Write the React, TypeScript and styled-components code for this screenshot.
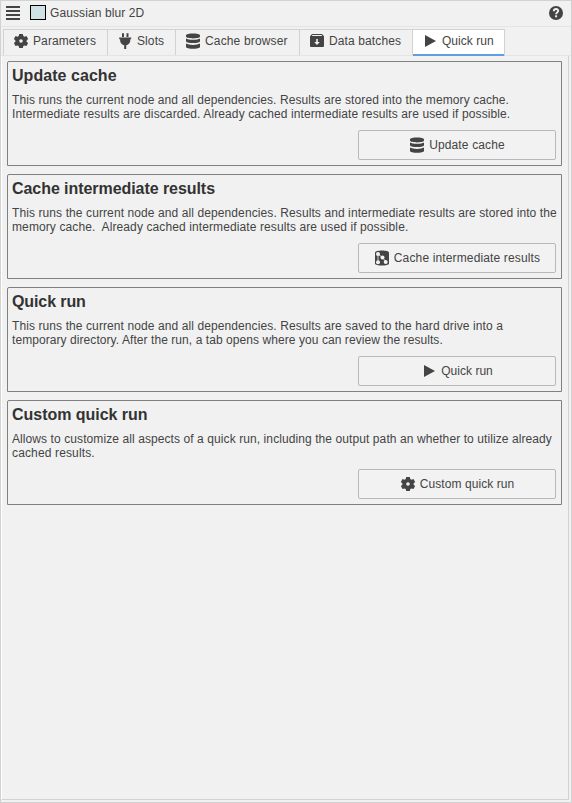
import React from 'react';
import styled, { createGlobalStyle } from 'styled-components';

const Global = createGlobalStyle`
  * { box-sizing: border-box; }
  html, body { margin: 0; padding: 0; background: #f1f1f1; }
  body { overflow: hidden; }
`;

const Window = styled.div`
  width: 572px;
  height: 803px;
  display: flex;
  flex-direction: column;
  border: 1px solid #d2d2d2;
  background: #f1f1f1;
  color: #444;
  font: 12px/14px 'Liberation Sans', Arial, sans-serif;
  white-space: pre;
`;

const Header = styled.header`
  height: 26px;
  flex: none;
  display: flex;
  align-items: center;
  padding: 0 8px 1px 5px;
  border-bottom: 1px solid #e4e4e4;
`;

const Swatch = styled.span`
  width: 16px;
  height: 15px;
  margin: 0 4px 1px 10px;
  border: 1px solid #000;
  background: #cee2e5;
`;

const Label = styled.span<{ $spacing: number }>`
  letter-spacing: ${(p) => p.$spacing}px;
`;

const Name = styled(Label)`
  flex: 1;
`;

const Icon = styled.svg`
  flex: none;
  display: block;
  fill: #444;
`;

const Tabs = styled.nav`
  height: 29px;
  flex: none;
  display: flex;
  padding: 2px 2px 0;
  border-bottom: 1px solid #e4e4e4;
`;

const Tab = styled.div<{ $width: number; $active?: boolean }>`
  width: ${(p) => p.$width}px;
  height: ${(p) => (p.$active ? 27 : 26)}px;
  display: flex;
  align-items: flex-start;
  gap: 4px;
  padding: 3px 0 0 9px;
  border-top: 1px solid #d2d2d2;
  border-right: 1px solid #d2d2d2;
  background: ${(p) => (p.$active ? '#fff' : 'transparent')};
  box-shadow: ${(p) => (p.$active ? 'inset 0 -2px #5f9fde' : 'none')};
  line-height: 16px;
  &:first-child {
    border-left: 1px solid #d2d2d2;
  }
`;

const Body = styled.main`
  flex: 1;
  margin: 0 2px 2px 0;
  padding: 5px 6px 0 5px;
  border: solid;
  border-width: 0 1px 1px;
  border-color: #d2d2d2;
  border-left-color: #fff;
  display: flex;
  flex-direction: column;
  gap: 8px;
`;

const Card = styled.section`
  height: 105px;
  display: flex;
  flex-direction: column;
  padding: 5px 5px 5px 4px;
  border: 1px solid #808080;
  border-top-left-radius: 2px;
`;

const Title = styled.h2<{ $spacing: number }>`
  margin: 0 0 8px;
  font-size: 16px;
  line-height: 18px;
  letter-spacing: ${(p) => p.$spacing}px;
  color: #333;
`;

const Line = styled(Label)`
  display: block;
  height: 14px;
`;

const Button = styled.button`
  width: 198px;
  height: 30px;
  margin: auto 0 0 auto;
  padding: 0;
  display: flex;
  align-items: center;
  justify-content: center;
  gap: 4px;
  border: 1px solid #b8b8bc;
  border-radius: 2px;
  background: #f2f2f2;
  color: #444;
  font: inherit;
`;

const paths = {
  gear:
    'M6.2 1h3.6l.5 2 1.2.7 2-.6 1.600 2.900-1.500 1.400v1.300L15.100 10.100l-1.600 2.900-2-.6-1.200.7-.5 1.900H6.200l-.5-1.900-1.200-.7-2 .6L.9 10.100l1.500-1.400V7.400L.9 6l1.600-2.900 2 .6L5.700 3ZM8 6.200a1.800 1.800 0 1 0 0 3.600 1.800 1.800 0 0 0 0-3.600Z',
  plug: 'M5 .3h2v3.700h-2ZM9.500 .3h2v3.700h-2ZM2.200 4.600h12v1.700h-1v2A5 5 0 0 1 9.200 12.200V16H7.200v-3.800A5 5 0 0 1 3.200 8.300V6.300H2.200Z',
  database:
    'M1 2.300C1-.2 15-.2 15 2.300v1.200C15 6 1 6 1 3.500ZM1 5.400c2.500 1.900 11.500 1.900 14 0v3C13.500 10.600 2.500 10.600 1 8.400ZM1 10.500c2.500 1.900 11.500 1.900 14 0v3.200c0 2.700-14 2.700-14 0Z',
  archive:
    'M3 1h10l2 2.300V13a1 1 0 0 1-1 1H2a1 1 0 0 1-1-1V3.300ZM3.500 2 2.700 3.100h10.600l-.8-1.100ZM7.200 6v3H5.200L8 12 10.800 9H8.800V6Z',
  play: 'M3 2v12l11-6Z',
};

type Glyph = keyof typeof paths | 'graph';

function Symbol({ name }: { name: Glyph }) {
  if (name === 'graph') {
    return (
      <Icon width="16" height="16" viewBox="0 0 16 16">
        <path d="M1 2.500C1-.3 15-.3 15 2.500v11c0 2.800-14 2.800-14 0Z" />
        <path d="M4 12V4l4.500 3.500L12 12" fill="none" stroke="#f1f1f1" strokeWidth=".8" />
        <g fill="#f1f1f1">
          <circle cx="4" cy="4" r="2" />
          <circle cx="4" cy="12.300" r="2" />
          <circle cx="8.500" cy="7.500" r="2" />
          <circle cx="11.700" cy="12" r="2" />
        </g>
      </Icon>
    );
  }
  return (
    <Icon width="16" height="16" viewBox="0 0 16 16">
      <path fillRule="evenodd" d={paths[name]} />
    </Icon>
  );
}

const tabs: {
  icon: Glyph;
  label: string;
  width: number;
  spacing: number;
  active?: boolean;
}[] = [
  { icon: 'gear', label: 'Parameters', width: 105, spacing: 0.1 },
  { icon: 'plug', label: 'Slots', width: 68, spacing: 0.1 },
  { icon: 'database', label: 'Cache browser', width: 124, spacing: 0.15 },
  { icon: 'archive', label: 'Data batches', width: 113, spacing: 0.12 },
  { icon: 'play', label: 'Quick run', width: 92, spacing: 0.03, active: true },
];

type Text = { text: string; spacing: number };

const cards: { title: Text; icon: Glyph; action: Text; lines: Text[] }[] = [
  {
    title: { text: 'Update cache', spacing: 0.05 },
    icon: 'database',
    action: { text: 'Update cache', spacing: 0.14 },
    lines: [
      {
        text: 'This runs the current node and all dependencies. Results are stored into the memory cache.',
        spacing: 0.09,
      },
      {
        text: 'Intermediate results are discarded. Already cached intermediate results are used if possible.',
        spacing: 0.108,
      },
    ],
  },
  {
    title: { text: 'Cache intermediate results', spacing: -0.06 },
    icon: 'graph',
    action: { text: 'Cache intermediate results', spacing: 0.14 },
    lines: [
      {
        text: 'This runs the current node and all dependencies. Results and intermediate results are stored into the',
        spacing: 0.097,
      },
      {
        text: 'memory cache.  Already cached intermediate results are used if possible.',
        spacing: 0.104,
      },
    ],
  },
  {
    title: { text: 'Quick run', spacing: -0.1 },
    icon: 'play',
    action: { text: 'Quick run', spacing: 0.03 },
    lines: [
      {
        text: 'This runs the current node and all dependencies. Results are saved to the hard drive into a',
        spacing: 0.095,
      },
      {
        text: 'temporary directory. After the run, a tab opens where you can review the results.',
        spacing: 0.068,
      },
    ],
  },
  {
    title: { text: 'Custom quick run', spacing: -0.03 },
    icon: 'gear',
    action: { text: 'Custom quick run', spacing: 0.07 },
    lines: [
      {
        text: 'Allows to customize all aspects of a quick run, including the output path an whether to utilize already',
        spacing: 0.087,
      },
      { text: 'cached results.', spacing: 0.14 },
    ],
  },
];

export default function App() {
  return (
    <Window>
      <Global />
      <Header>
        <Icon width="14" height="14" viewBox="0 0 14 14">
          <path d="M0 0h14v2H0ZM0 4h14v2H0ZM0 8h14v2H0ZM0 12h14v2H0Z" />
        </Icon>
        <Swatch />
        <Name $spacing={0.1}>Gaussian blur 2D</Name>
        <Icon width="14" height="14" viewBox="0 0 14 14">
          <circle cx="7" cy="7" r="7" />
          <path
            d="M4.800 5.200C4.900 2.300 9.300 2.400 9.200 5 9.100 6.500 7.100 6.500 7.100 8.200"
            fill="none"
            stroke="#f1f1f1"
            strokeWidth="1.900"
          />
          <path d="M6.100 9.300h2v2h-2Z" fill="#f1f1f1" />
        </Icon>
      </Header>
      <Tabs>
        {tabs.map((t) => (
          <Tab key={t.label} $width={t.width} $active={t.active}>
            <Symbol name={t.icon} />
            <Label $spacing={t.spacing}>{t.label}</Label>
          </Tab>
        ))}
      </Tabs>
      <Body>
        {cards.map((c) => (
          <Card key={c.title.text}>
            <Title $spacing={c.title.spacing}>{c.title.text}</Title>
            {c.lines.map((l) => (
              <Line key={l.text} $spacing={l.spacing}>
                {l.text}
              </Line>
            ))}
            <Button>
              <Symbol name={c.icon} />
              <Label $spacing={c.action.spacing}>{c.action.text}</Label>
            </Button>
          </Card>
        ))}
      </Body>
    </Window>
  );
}
